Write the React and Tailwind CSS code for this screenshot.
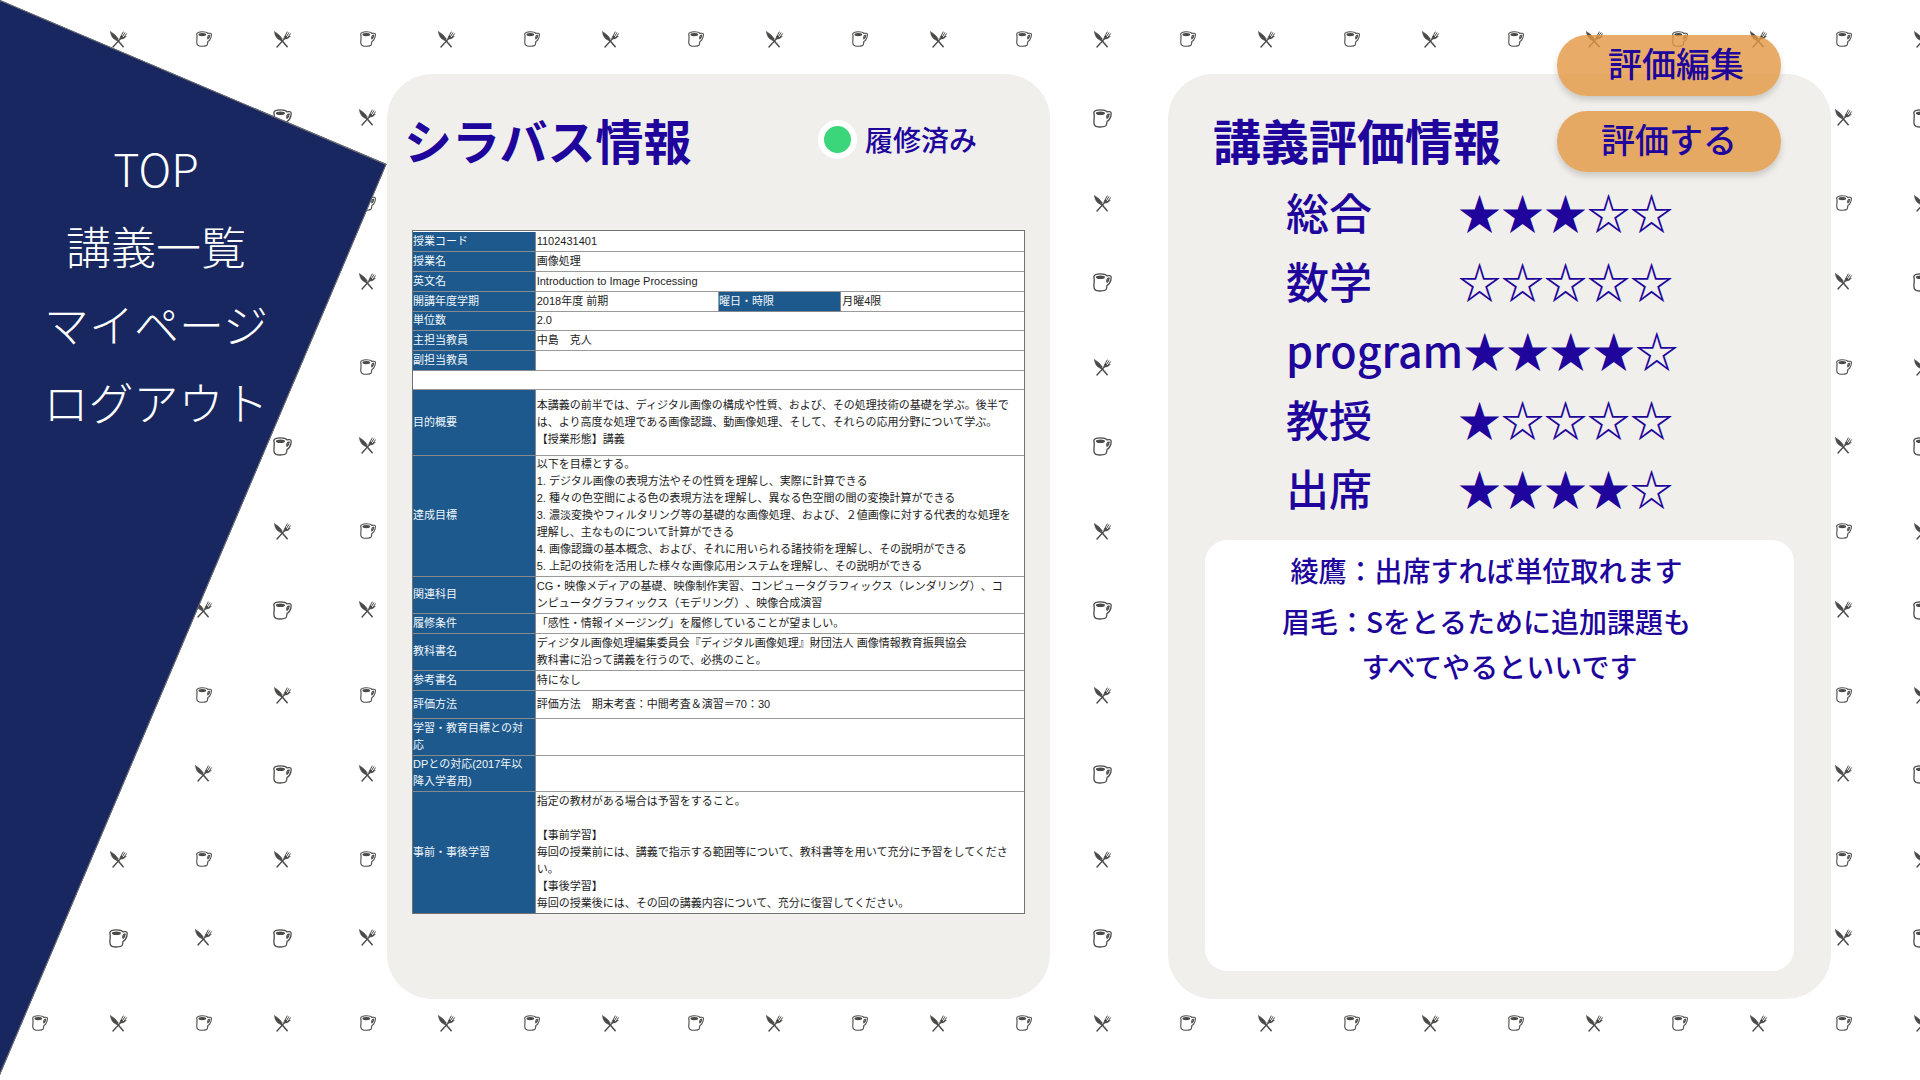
import React from 'react';

const INK = '#4a4a48';

function Cup() {
  return (
    <g fill="none" stroke={INK} strokeWidth="1.1" strokeLinecap="round" strokeLinejoin="round">
      <path d="M.7 3C1.200 1.300 3.400.7 6.200.7c2.800 0 4.800.5 5.600 1.700 1.400-.3 3.500-.4 3.600 1 .1 1.900-.6 4.200-1.600 5.500-.6.8-1.300 1.300-1.900 1.500-.1 1.500-.3 2.900-.9 3.700-1.100 1.300-6.200 1.500-8.400.6C.5 14 .6 12.400.8 10c.2-2.400.7-4.700-.1-7Z" />
      <path d="M13.700 4.300c-1-.1-1.700.5-1.900 1.500-.2.9-.1 1.700.1 2.100.9-.7 1.700-2.100 1.800-3.600Z" />
      <ellipse cx="6.300" cy="3.600" rx="3.300" ry="1" fill={INK} />
    </g>
  );
}

function Utensils() {
  return (
    <g fill="none" stroke={INK} strokeLinecap="round" strokeLinejoin="round">
      <path d="M.6.8C.6 3 1.600 5.800 3.400 7.400 4.800 8.600 6 9 6.600 9.600l1.800-1.400C7 5.600 4.400 3 .6.800Z" fill={INK} strokeWidth=".6" />
      <path d="M7.400 9l5.800 6.800" strokeWidth="1.500" />
      <path d="M3 16l7.600-8.400" strokeWidth="1.400" />
      <path d="M10.200 7.800c-.2-1.400.2-2.400 1-3.200l2.600 2c1.200-.2 1.600-.6 2.400-1.600-1 1.800-3 3.400-6 2.800Z" fill={INK} strokeWidth=".8" />
      <path d="M11.200 4.800L13.200 1M12.500 5.600l2.300-3.800M13.800 6.600l2.600-3.800" strokeWidth="1" />
    </g>
  );
}

function Backdrop() {
  return (
    <svg className="absolute inset-0 h-full w-full" aria-hidden="true">
      <defs>
        <pattern id="cafe" width="164" height="164" patternUnits="userSpaceOnUse">
          <g transform="translate(32 31)"><Cup /></g>
          <g transform="translate(110 31)"><Utensils /></g>
          <g transform="translate(31 109)"><Utensils /></g>
          <g transform="translate(109 109) scale(1.180)"><Cup /></g>
        </pattern>
      </defs>
      <rect width="100%" height="100%" fill="url(#cafe)" />
    </svg>
  );
}

const links = ['TOP', '講義一覧', 'マイページ', 'ログアウト'];

const ratings = [
  { label: '総合', score: 3 },
  { label: '数学', score: 0 },
  { label: 'program', score: 4 },
  { label: '教授', score: 1 },
  { label: '出席', score: 4 },
];

const rows = [
  { label: '授業コード', text: '1102431401', height: 'h-[19px]' },
  { label: '授業名', text: '画像処理', height: 'h-[20px]' },
  { label: '英文名', text: 'Introduction to Image Processing', height: 'h-[20px]' },
  { label: '開講年度学期', text: '2018年度 前期', extra: ['曜日・時限', '月曜4限'], height: 'h-[20px]' },
  { label: '単位数', text: '2.0', height: 'h-[19px]' },
  { label: '主担当教員', text: '中島　克人', height: 'h-[20px]' },
  { label: '副担当教員', text: '', height: 'h-[20px]' },
  { blank: true, height: 'h-[19px]' },
  {
    label: '目的概要',
    text: '本講義の前半では、ディジタル画像の構成や性質、および、その処理技術の基礎を学ぶ。後半で\nは、より高度な処理である画像認識、動画像処理、そして、それらの応用分野について学ぶ。\n【授業形態】講義',
    height: 'h-[66px]',
  },
  {
    label: '達成目標',
    text: '以下を目標とする。\n1. デジタル画像の表現方法やその性質を理解し、実際に計算できる\n2. 種々の色空間による色の表現方法を理解し、異なる色空間の間の変換計算ができる\n3. 濃淡変換やフィルタリング等の基礎的な画像処理、および、２値画像に対する代表的な処理を\n理解し、主なものについて計算ができる\n4. 画像認識の基本概念、および、それに用いられる諸技術を理解し、その説明ができる\n5. 上記の技術を活用した様々な画像応用システムを理解し、その説明ができる',
    height: 'h-[121px]',
  },
  {
    label: '関連科目',
    text: 'CG・映像メディアの基礎、映像制作実習、コンピュータグラフィックス（レンダリング）、コ\nンピュータグラフィックス（モデリング）、映像合成演習',
    height: 'h-[37px]',
  },
  { label: '履修条件', text: '「感性・情報イメージング」を履修していることが望ましい。', height: 'h-[20px]' },
  {
    label: '教科書名',
    text: 'ディジタル画像処理編集委員会『ディジタル画像処理』財団法人 画像情報教育振興協会\n教科書に沿って講義を行うので、必携のこと。',
    height: 'h-[37px]',
  },
  { label: '参考書名', text: '特になし', height: 'h-[20px]' },
  { label: '評価方法', text: '評価方法　期末考査：中間考査＆演習＝70：30', height: 'h-[28px]' },
  { label: '学習・教育目標との対\n応', text: '', height: 'h-[37px]' },
  { label: 'DPとの対応(2017年以\n降入学者用)', text: '', height: 'h-[36px]' },
  {
    label: '事前・事後学習',
    text: '指定の教材がある場合は予習をすること。\n\n【事前学習】\n毎回の授業前には、講義で指示する範囲等について、教科書等を用いて充分に予習をしてくださ\nい。\n【事後学習】\n毎回の授業後には、その回の講義内容について、充分に復習してください。',
    height: 'h-[122px]',
  },
];

function Label({ children }) {
  return (
    <th scope="row" className="border border-[#868a8e] bg-[#1e598d] p-0 text-left font-normal text-[#f0f7fa]">
      {children}
    </th>
  );
}

function Syllabus() {
  return (
    <div className="border border-[#707274] bg-white pt-px">
      <table className="w-full table-fixed border-collapse border-hidden whitespace-pre font-['Liberation_Sans','Noto_Sans_CJK_JP',sans-serif] text-[11px] leading-[17px] text-[#1c1c1c] [text-spacing-trim:space-all]">
        <colgroup>
          <col className="w-[20%]" />
          <col className="w-[30%]" />
          <col className="w-[20%]" />
          <col />
        </colgroup>
        <tbody>
          {rows.map((row, i) => (
            <tr key={i} className={row.height}>
              {row.blank ? (
                <td colSpan={4} className="border border-[#9a9a9a] p-0" />
              ) : (
                <>
                  <Label>{row.label}</Label>
                  <td colSpan={row.extra ? 1 : 3} className="border border-[#9a9a9a] px-px py-0">
                    {row.text}
                  </td>
                  {row.extra && (
                    <>
                      <Label>{row.extra[0]}</Label>
                      <td className="border border-[#9a9a9a] px-px py-0">{row.extra[1]}</td>
                    </>
                  )}
                </>
              )}
            </tr>
          ))}
        </tbody>
      </table>
    </div>
  );
}

function ActionButton({ children, className }) {
  return (
    <button
      type="button"
      className={`h-[61px] w-[224px] rounded-[30px] bg-[#e29742]/80 pb-[6px] text-[34px] leading-[50px] font-medium shadow-[0_4px_6px_rgba(0,0,0,0.16)] ${className}`}
    >
      {children}
    </button>
  );
}

export default function App() {
  return (
    <div className="relative flex min-h-screen overflow-hidden bg-white font-['Noto_Sans_CJK_JP',sans-serif] text-[#20059c] [text-spacing-trim:space-all]">
      <Backdrop />
      <div className="absolute top-0 left-0 h-[1100px] w-[420px] origin-top-left rotate-[23deg] border border-[#707070] bg-[#18275f]" />

      <nav className="relative w-[387px] shrink-0 pt-[129px]">
        <ul className="flex w-[312px] flex-col text-center text-[45px] leading-[78px] font-light text-white">
          {links.map((text) => (
            <li key={text}>
              <a href="#">{text}</a>
            </li>
          ))}
        </ul>
      </nav>

      <main className="relative grid flex-1 grid-cols-2 gap-[118px] pt-[74px] pr-[89px] pb-[81px]">
        <section className="min-w-0 rounded-[45px] bg-[#f0efeb] px-[25px] pt-[35px] pb-[85px]">
          <header className="mb-[61px] flex h-[60px] items-center justify-between pr-[48px]">
            <h2 className="-ml-2 text-[48px] leading-[60px] font-bold">シラバス情報</h2>
            <p className="flex items-center gap-2 text-[28px] leading-[56px] font-medium">
              <span className="size-[39px] rounded-full border-[6px] border-white bg-[#3bd67a]" />
              履修済み
            </p>
          </header>
          <Syllabus />
        </section>

        <section className="relative flex min-w-0 flex-col rounded-[45px] bg-[#f0efeb] px-[37px] pt-[35px] pb-[28px]">
          <h2 className="ml-2 text-[48px] leading-[60px] font-bold">講義評価情報</h2>
          <div className="absolute -top-[39px] right-[50px] flex flex-col gap-[15px]">
            <ActionButton className="pl-[14px]">評価編集</ActionButton>
            <ActionButton>評価する</ActionButton>
          </div>

          <ul className="mt-[8px] mb-[18px] pl-[81px] text-[43px] leading-[69px] font-medium">
            {ratings.map(({ label, score }) => (
              <li key={label} className="flex">
                <span className="min-w-[172px]">{label}</span>
                <span aria-label={`${score} / 5`}>{'★'.repeat(score) + '☆'.repeat(5 - score)}</span>
              </li>
            ))}
          </ul>

          <div className="flex-1 rounded-[22px] bg-white pt-2 text-center text-[28px] leading-[45px] font-medium">
            <p className="pr-[26px]">綾鷹：出席すれば単位取れます</p>
            <p className="mt-[6px] pr-[26px]">眉毛：Sをとるために追加課題も</p>
            <p>すべてやるといいです</p>
          </div>
        </section>
      </main>
    </div>
  );
}
